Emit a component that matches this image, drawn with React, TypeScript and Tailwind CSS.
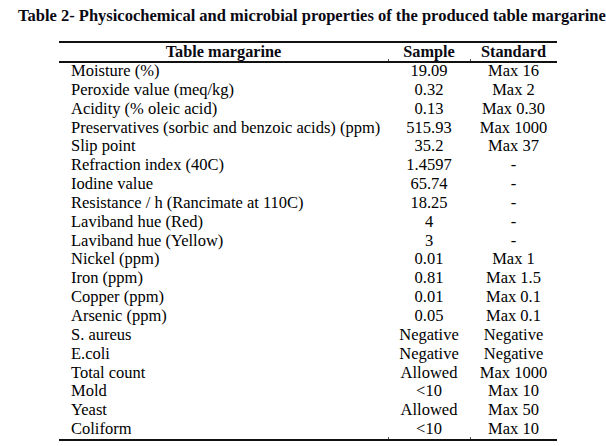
import React from "react";

const rows: [string, string, string][] = [
  ["Moisture (%)", "19.09", "Max 16"],
  ["Peroxide value (meq/kg)", "0.32", "Max 2"],
  ["Acidity (% oleic acid)", "0.13", "Max 0.30"],
  ["Preservatives (sorbic and benzoic acids) (ppm)", "515.93", "Max 1000"],
  ["Slip point", "35.2", "Max 37"],
  ["Refraction index (40C)", "1.4597", "-"],
  ["Iodine value", "65.74", "-"],
  ["Resistance / h (Rancimate at 110C)", "18.25", "-"],
  ["Laviband hue (Red)", "4", "-"],
  ["Laviband hue (Yellow)", "3", "-"],
  ["Nickel (ppm)", "0.01", "Max 1"],
  ["Iron (ppm)", "0.81", "Max 1.5"],
  ["Copper (ppm)", "0.01", "Max 0.1"],
  ["Arsenic (ppm)", "0.05", "Max 0.1"],
  ["S. aureus", "Negative", "Negative"],
  ["E.coli", "Negative", "Negative"],
  ["Total count", "Allowed", "Max 1000"],
  ["Mold", "<10", "Max 10"],
  ["Yeast", "Allowed", "Max 50"],
  ["Coliform", "<10", "Max 10"],
];

export default function App() {
  return (
    <div className="w-[606px] h-[446px] bg-white text-black font-['Liberation_Serif',serif] overflow-hidden">
      <div className="pl-[18px] pt-[6px] text-[16.5px] font-bold leading-[19px] whitespace-nowrap text-[#0a0a14]">
        Table 2- Physicochemical and microbial properties of the produced table margarine
      </div>
      <div className="ml-[59px] mt-[16px] w-[498px] border-t-2 border-b-2 border-[#111]">
        <div className="relative grid grid-cols-[329px_82px_87px] border-b-2 border-[#111] text-[16.3px] font-bold leading-[18px] text-[#0a0a14]">
          <div className="text-center">Table margarine</div>
          <div className="text-center">Sample</div>
          <div className="text-center">Standard</div>
          <span className="absolute left-[329px] bottom-0 w-px h-[2px] bg-[#555]" />
          <span className="absolute left-[411px] bottom-0 w-px h-[2px] bg-[#555]" />
        </div>
        <div className="relative -mt-[1px]">
          {rows.map((r, i) => (
            <div
              key={i}
              className="grid grid-cols-[329px_82px_87px] text-[16.5px] leading-[18.85px] whitespace-nowrap"
            >
              <div className="pl-[12px]">{r[0]}</div>
              <div className="text-center">{r[1]}</div>
              <div className="text-center">{r[2]}</div>
            </div>
          ))}
          <span className="absolute left-[329px] bottom-0 w-px h-[2px] bg-[#555]" />
          <span className="absolute left-[411px] bottom-0 w-px h-[2px] bg-[#555]" />
        </div>
      </div>
    </div>
  );
}
